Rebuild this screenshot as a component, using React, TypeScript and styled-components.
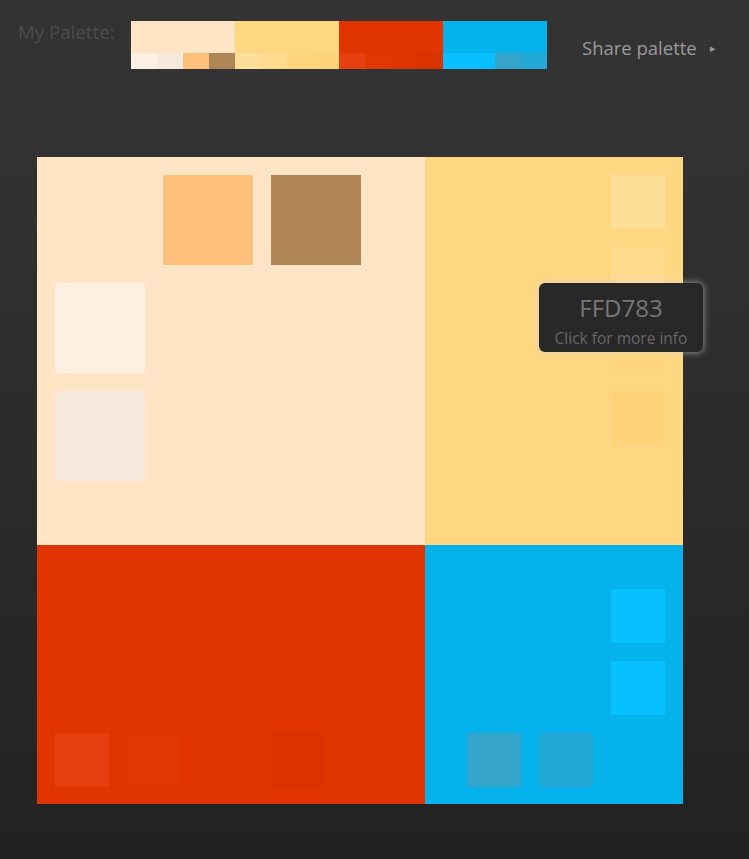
import styled, { createGlobalStyle } from 'styled-components';

const GlobalStyle = createGlobalStyle`
  html, body {
    margin: 0;
    padding: 0;
    height: 100%;
  }
  body {
    font-family: 'Open Sans', 'Noto Sans', sans-serif;
    background: linear-gradient(to bottom, #333333 0px, #333333 110px, #222222 100%);
    min-height: 859px;
  }
`;

type Cell = { color: string; col: number; row: number };

interface Shade {
  base: string;
  shades: string[];
}

const palette: Shade[] = [
  { base: '#FFE4C6', shades: ['#FFF0E2', '#F6EADC', '#FFC07D', '#B08556'] },
  { base: '#FFD783', shades: ['#FFDE98', '#FFDB8F', '#FFD67E', '#FFD379'] },
  { base: '#E03500', shades: ['#E63F10', '#E13700', '#DE3500', '#DA3300'] },
  { base: '#05B2EC', shades: ['#06C0FF', '#06C0FF', '#35A5CC', '#24A8D6'] },
];

const topLeft: Cell[] = [
  { color: '#FFC07D', col: 2, row: 1 },
  { color: '#B08556', col: 3, row: 1 },
  { color: '#FFF0E2', col: 1, row: 2 },
  { color: '#F6EADC', col: 1, row: 3 },
];

const topRight: Cell[] = [
  { color: '#FFDE98', col: 1, row: 1 },
  { color: '#FFDB8F', col: 1, row: 2 },
  { color: '#FFD67E', col: 1, row: 3 },
  { color: '#FFD379', col: 1, row: 4 },
];

const bottomLeft: Cell[] = [
  { color: '#E63F10', col: 1, row: 1 },
  { color: '#E13700', col: 2, row: 1 },
  { color: '#E03500', col: 3, row: 1 },
  { color: '#DA3300', col: 4, row: 1 },
];

const bottomRight: Cell[] = [
  { color: '#06C0FF', col: 3, row: 1 },
  { color: '#06C0FF', col: 3, row: 2 },
  { color: '#35A5CC', col: 1, row: 3 },
  { color: '#24A8D6', col: 2, row: 3 },
];

const App = () => {
  return (
    <>
      <GlobalStyle />
      <Page>
        <Header>
          <Label>My Palette:</Label>
          <Strip>
            {palette.map((p) => (
              <StripGroup key={p.base}>
                <StripMain $color={p.base} />
                <StripShades>
                  {p.shades.map((s, i) => (
                    <StripShade key={i} $color={s} />
                  ))}
                </StripShades>
              </StripGroup>
            ))}
          </Strip>
          <ShareButton>
            Share palette <Arrow>▸</Arrow>
          </ShareButton>
        </Header>

        <Board>
          <BoardRow $height={388}>
            <Quadrant $color="#FFE4C6" $width={388} $cell={90} $align="start">
              {topLeft.map((c, i) => (
                <Swatch key={i} $color={c.color} $col={c.col} $row={c.row} />
              ))}
            </Quadrant>
            <Quadrant $color="#FFD783" $width={258} $cell={54} $align="top-right">
              {topRight.map((c, i) => (
                <Swatch key={i} $color={c.color} $col={c.col} $row={c.row} />
              ))}
              <Tooltip>
                <TooltipCode>FFD783</TooltipCode>
                <TooltipHint>Click for more info</TooltipHint>
              </Tooltip>
            </Quadrant>
          </BoardRow>
          <BoardRow $height={259}>
            <Quadrant $color="#E03500" $width={388} $cell={54} $align="bottom-left">
              {bottomLeft.map((c, i) => (
                <Swatch key={i} $color={c.color} $col={c.col} $row={c.row} />
              ))}
            </Quadrant>
            <Quadrant $color="#05B2EC" $width={258} $cell={54} $align="bottom-right">
              {bottomRight.map((c, i) => (
                <Swatch key={i} $color={c.color} $col={c.col} $row={c.row} />
              ))}
            </Quadrant>
          </BoardRow>
        </Board>
      </Page>
    </>
  );
};

const Page = styled.div`
  width: 749px;
  height: 859px;
  display: flex;
  flex-direction: column;
`;

const Header = styled.header`
  display: flex;
  align-items: flex-start;
  padding: 21px 0 0 18px;
  height: 157px;
  flex-shrink: 0;
  box-sizing: border-box;
`;

const Label = styled.span`
  width: 113px;
  font-size: 18.7px;
  line-height: 22px;
  color: #4b4b4b;
`;

const Strip = styled.div`
  display: flex;
  width: 416px;
`;

const StripGroup = styled.div`
  display: flex;
  flex-direction: column;
  width: 104px;
`;

const StripMain = styled.div<{ $color: string }>`
  height: 32px;
  background: ${({ $color }) => $color};
`;

const StripShades = styled.div`
  display: flex;
  height: 16px;
`;

const StripShade = styled.div<{ $color: string }>`
  flex: 1;
  background: ${({ $color }) => $color};
`;

const ShareButton = styled.button`
  margin: 15px 0 0 35px;
  padding: 0;
  border: none;
  background: none;
  font-family: inherit;
  font-size: 18.5px;
  line-height: 24px;
  color: #9a9a9a;
  display: flex;
  align-items: center;
  gap: 13px;
`;

const Arrow = styled.span`
  font-size: 11px;
  color: #9a9a9a;
`;

const Board = styled.main`
  margin-left: 37px;
  width: 646px;
  display: flex;
  flex-direction: column;
`;

const BoardRow = styled.div<{ $height: number }>`
  display: flex;
  height: ${({ $height }) => $height}px;
`;

type Align = 'start' | 'top-right' | 'bottom-left' | 'bottom-right';

const Quadrant = styled.section<{
  $color: string;
  $width: number;
  $cell: number;
  $align: Align;
}>`
  position: relative;
  width: ${({ $width }) => $width}px;
  box-sizing: border-box;
  background: ${({ $color }) => $color};
  padding: 18px 18px 17px 18px;
  display: grid;
  grid-auto-columns: ${({ $cell }) => $cell}px;
  grid-auto-rows: ${({ $cell }) => $cell}px;
  gap: 18px;
  justify-content: ${({ $align }) =>
    $align === 'top-right' || $align === 'bottom-right' ? 'end' : 'start'};
  align-content: ${({ $align }) =>
    $align === 'bottom-left' || $align === 'bottom-right' ? 'end' : 'start'};
`;

const Swatch = styled.div<{ $color: string; $col: number; $row: number }>`
  grid-column: ${({ $col }) => $col};
  grid-row: ${({ $row }) => $row};
  background: ${({ $color }) => $color};
`;

const Tooltip = styled.div`
  position: absolute;
  left: 114px;
  top: 126px;
  width: 164px;
  height: 69px;
  box-sizing: border-box;
  border-radius: 6px;
  background: #282828;
  box-shadow: 0 0 6px 1px rgba(210, 210, 210, 0.55);
  display: flex;
  flex-direction: column;
  align-items: center;
  padding-top: 8px;
`;

const TooltipCode = styled.span`
  font-size: 24px;
  line-height: 34px;
  color: #777777;
`;

const TooltipHint = styled.span`
  margin-top: 2px;
  font-size: 15.5px;
  line-height: 22px;
  color: #666666;
`;

export default App;
